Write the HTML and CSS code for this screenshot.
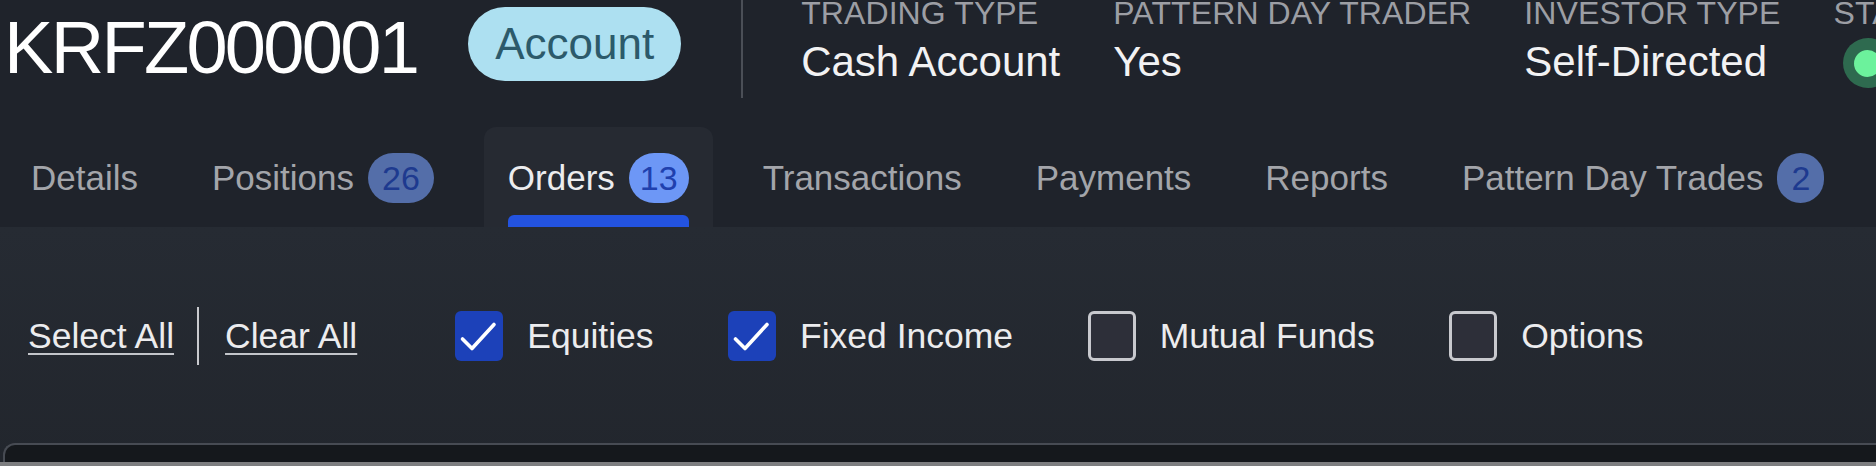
FILE: index.html
```html
<!DOCTYPE html>
<html lang="en">
<head>
<meta charset="utf-8">
<title>KRFZ000001 – Orders</title>
<link rel="stylesheet" href="styles.css">
</head>
<body>
<div class="page">
  <header class="header">
    <h1 class="acct-id">KRFZ000001</h1>
    <span class="pill">Account</span>
    <div class="vdivider"></div>
    <dl class="info">
      <div class="info-col"><dt>Trading Type</dt><dd>Cash Account</dd></div>
      <div class="info-col"><dt>Pattern Day Trader</dt><dd>Yes</dd></div>
      <div class="info-col"><dt>Investor Type</dt><dd>Self-Directed</dd></div>
      <div class="info-col"><dt>Status</dt><dd><span class="status-dot"><span class="status-core"></span></span></dd></div>
    </dl>
  </header>

  <nav class="tabs">
    <div class="tab"><div class="tab-label">Details</div><div class="tab-bar"></div></div>
    <div class="tab"><div class="tab-label">Positions <span class="badge">26</span></div><div class="tab-bar"></div></div>
    <div class="tab active"><div class="tab-label">Orders <span class="badge badge-active">13</span></div><div class="tab-bar"></div></div>
    <div class="tab"><div class="tab-label">Transactions</div><div class="tab-bar"></div></div>
    <div class="tab"><div class="tab-label">Payments</div><div class="tab-bar"></div></div>
    <div class="tab"><div class="tab-label">Reports</div><div class="tab-bar"></div></div>
    <div class="tab"><div class="tab-label">Pattern Day Trades <span class="badge">2</span></div><div class="tab-bar"></div></div>
  </nav>

  <section class="content">
    <div class="filters">
      <a class="link">Select All</a>
      <span class="fdivider"></span>
      <a class="link">Clear All</a>
      <div class="checks">
        <label class="check">
          <span class="box checked"><svg viewBox="0 0 48 50" width="48" height="50"><path d="M7.5 28 L17 37.5 L39 13.5" fill="none" stroke="#fff" stroke-width="3.6" stroke-linecap="round" stroke-linejoin="round"/></svg></span>
          <span class="check-text">Equities</span>
        </label>
        <label class="check">
          <span class="box checked"><svg viewBox="0 0 48 50" width="48" height="50"><path d="M7.5 28 L17 37.5 L39 13.5" fill="none" stroke="#fff" stroke-width="3.6" stroke-linecap="round" stroke-linejoin="round"/></svg></span>
          <span class="check-text">Fixed Income</span>
        </label>
        <label class="check">
          <span class="box"></span>
          <span class="check-text">Mutual Funds</span>
        </label>
        <label class="check">
          <span class="box"></span>
          <span class="check-text">Options</span>
        </label>
      </div>
    </div>
    <div class="panel"></div>
  </section>
  <div class="bottom-strip"></div>
</div>
</body>
</html>
```

FILE: styles.css
```css
html, body {
  margin: 0;
  padding: 0;
}
body {
  background: #1f232b;
  font-family: "Liberation Sans", Arial, sans-serif;
  width: 1876px;
  height: 466px;
  overflow: hidden;
}
.page {
  width: 1876px;
  height: 466px;
  display: flex;
  flex-direction: column;
  overflow: hidden;
}

/* Header */
.header {
  display: flex;
  align-items: flex-start;
  height: 127px;
  padding-left: 4px;
  flex-shrink: 0;
  white-space: nowrap;
}
.acct-id {
  margin: 11px 0 0;
  font-size: 74px;
  line-height: 74px;
  font-weight: 400;
  letter-spacing: -2.7px;
  color: #ffffff;
  flex-shrink: 0;
}
.pill {
  margin: 7px 0 0 51px;
  height: 74px;
  line-height: 74px;
  padding: 0 27px;
  border-radius: 37px;
  background: #ade0f1;
  color: #2c5a6b;
  font-size: 44px;
  flex-shrink: 0;
}
.vdivider {
  margin-left: 60px;
  width: 2px;
  height: 98px;
  background: #4b4f57;
  flex-shrink: 0;
}
.info {
  display: flex;
  gap: 53px;
  margin: -1px 0 0 58px;
  flex-shrink: 0;
}
.info-col {
  display: flex;
  flex-direction: column;
  gap: 14px;
}
.info dt {
  font-size: 32px;
  line-height: 28px;
  letter-spacing: 0.1px;
  text-transform: uppercase;
  color: #9c9ea4;
}
.info dd {
  margin: 0;
  font-size: 42px;
  line-height: 42px;
  color: #f2f2f3;
}
.status-dot {
  display: flex;
  align-items: center;
  justify-content: center;
  width: 50px;
  height: 50px;
  margin: -3px 0 0 9px;
  border-radius: 50%;
  background: #2e6a4f;
}
.status-core {
  width: 27px;
  height: 27px;
  border-radius: 50%;
  background: #6cf29c;
}

/* Tabs */
.tabs {
  display: flex;
  gap: 26px;
  padding-left: 7px;
  flex-shrink: 0;
  white-space: nowrap;
}
.tab {
  display: flex;
  flex-direction: column;
  padding: 26px 24px 0;
  border-radius: 12px 12px 0 0;
}
.tab-label {
  display: flex;
  align-items: center;
  gap: 14px;
  height: 50px;
  font-size: 35px;
  color: #a3a5aa;
}
.tab-bar {
  height: 12px;
  margin-top: 12px;
  border-radius: 6px 6px 0 0;
}
.tab.active {
  background: #262a32;
}
.tab.active .tab-label {
  color: #ececee;
}
.tab.active .tab-bar {
  background: #2353e0;
}
.badge {
  display: inline-flex;
  align-items: center;
  justify-content: center;
  height: 50px;
  padding: 0 14px;
  border-radius: 25px;
  background: #546ea9;
  color: #1e3a8f;
  font-size: 34px;
}
.badge-active {
  padding: 0 11px;
  background: #6d97f6;
  color: #1f40ae;
}

/* Content */
.content {
  flex: 1;
  display: flex;
  flex-direction: column;
  background: linear-gradient(to bottom, #262b33, #22262d);
}
.filters {
  display: flex;
  align-items: center;
  height: 58px;
  margin-top: 80px;
  padding-left: 28px;
  font-size: 35.5px;
  color: #ececee;
  white-space: nowrap;
}
.link {
  color: #ececee;
  text-decoration: underline;
  text-decoration-thickness: 2px;
  text-underline-offset: 5px;
  text-decoration-color: #c3c5ca;
}
.fdivider {
  width: 2px;
  height: 58px;
  margin: 0 26px 0 23px;
  background: #c9cace;
}
.checks {
  display: flex;
  align-items: center;
  gap: 74.5px;
  margin-left: 98px;
}
.check {
  display: flex;
  align-items: center;
  gap: 24px;
}
.box {
  box-sizing: border-box;
  width: 48px;
  height: 50px;
  border-radius: 6px;
  border: 3px solid #c8c9ce;
  background: #2d2f39;
  display: block;
}
.box.checked {
  border: none;
  background: #1c41b9;
}
.box svg {
  display: block;
}
.panel {
  margin-top: auto;
  margin-left: 3px;
  height: 17px;
  background: #15181c;
  border: 2px solid #474b53;
  border-bottom: none;
  border-right: none;
  border-radius: 12px 0 0 0;
}
.bottom-strip {
  height: 4px;
  background: #7d7e80;
  flex-shrink: 0;
}
```
